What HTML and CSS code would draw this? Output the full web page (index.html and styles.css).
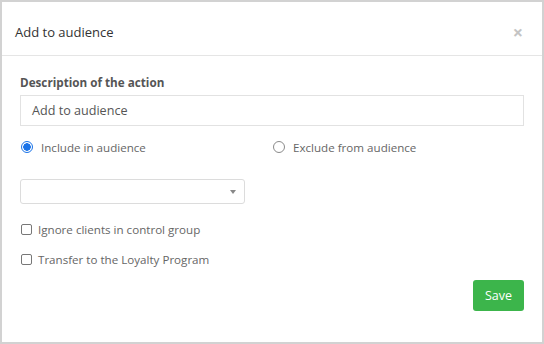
FILE: index.html
```html
<!DOCTYPE html>
<html lang="en">
<head>
    <meta charset="UTF-8">
    <title>Add to audience</title>
    <link rel="stylesheet" href="styles.css">
</head>
<body>
    <div class="modal">
        <div class="modal-header">
            <h4 class="modal-title">Add to audience</h4>
            <span class="close">&times;</span>
        </div>

        <div class="modal-body">
            <label class="field-label">Description of the action</label>
            <div class="text-input">Add to audience</div>

            <div class="radio-row">
                <div class="radio-item">
                    <span class="radio checked"></span>
                    <span>Include in audience</span>
                </div>
                <div class="radio-item">
                    <span class="radio"></span>
                    <span>Exclude from audience</span>
                </div>
            </div>

            <div class="select">
                <span class="caret"></span>
            </div>

            <div class="check-item">
                <span class="checkbox"></span>
                <span>Ignore clients in control group</span>
            </div>
            <div class="check-item">
                <span class="checkbox"></span>
                <span>Transfer to the Loyalty Program</span>
            </div>

            <div class="footer">
                <button class="btn-save">Save</button>
            </div>
        </div>
    </div>
</body>
</html>
```

FILE: styles.css
```css
body {
    margin: 0;
    font-family: 'Open Sans', 'Noto Sans', sans-serif;
    background-color: #fff;
}

.modal {
    width: 544px;
    height: 344px;
    box-sizing: border-box;
    border: 2px solid #d2d2d2;
    background-color: #fff;
}

.modal-header {
    display: flex;
    align-items: center;
    justify-content: space-between;
    height: 46px;
    padding: 7px 19px 0 13px;
    border-bottom: 1px solid #e5e5e5;
}

.modal-title {
    margin: 0;
    font-size: 13px;
    font-weight: normal;
    color: #333;
}

.close {
    color: #c4c4c4;
    font-size: 18px;
    font-weight: bold;
    line-height: 1;
}

.modal-body {
    padding: 16px 18px 0 18px;
}

.field-label {
    display: block;
    font-size: 11.7px;
    font-weight: bold;
    color: #555;
    line-height: 20px;
}

.text-input {
    margin-top: 3px;
    height: 29px;
    border: 1px solid #e2e2e2;
    padding: 0 11px;
    font-size: 12.6px;
    line-height: 29px;
    color: #555;
}

.radio-row {
    display: flex;
    margin-top: 10px;
    height: 22px;
    font-size: 11.6px;
    color: #666;
}

.radio-item {
    display: flex;
    align-items: center;
    width: 252px;
}

.radio {
    width: 10px;
    height: 10px;
    margin: 0 8px 0 1px;
    border: 1px solid #8a8a8a;
    border-radius: 50%;
    box-sizing: content-box;
    background-color: #fff;
}

.radio.checked {
    border-color: #1a73e8;
    background: radial-gradient(circle, #1a73e8 0 3.5px, #fff 4px);
}

.select {
    position: relative;
    margin-top: 21px;
    width: 223px;
    height: 23px;
    border: 1px solid #dcdcdc;
    border-radius: 3px;
}

.caret {
    position: absolute;
    right: 8px;
    top: 10px;
    border-left: 3px solid transparent;
    border-right: 3px solid transparent;
    border-top: 4px solid #888;
}

.check-item {
    display: flex;
    align-items: center;
    height: 20px;
    margin-top: 15px;
    font-size: 11.6px;
    color: #666;
}

.check-item + .check-item {
    margin-top: 10px;
}

.checkbox {
    width: 9px;
    height: 9px;
    margin: 0 6px 0 1px;
    border: 1px solid #777;
    border-radius: 2px;
}

.footer {
    display: flex;
    justify-content: flex-end;
    margin-top: 11px;
}

.btn-save {
    width: 51px;
    height: 31px;
    border: none;
    border-radius: 3px;
    background-color: #3cb54b;
    color: #fff;
    font-family: inherit;
    font-size: 12.5px;
    padding: 0;
}
```
